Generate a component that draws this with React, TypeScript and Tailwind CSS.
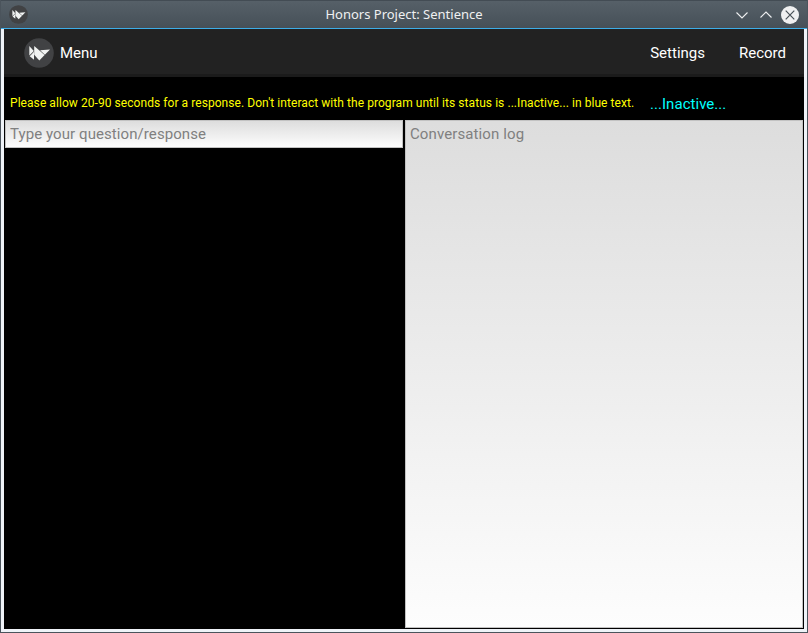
function KivyLogo({ className }: { className: string }) {
  return (
    <svg viewBox="0 0 30 30" className={className} aria-hidden="true">
      <circle cx="15" cy="15" r="14.8" fill="#414244" />
      <path d="M5.3 8 9.8 13 5.3 17.6Z" fill="#f1f3f2" />
      <path d="M10 13.8V21.8L5.7 18.2Z" fill="#f1f3f2" />
      <path d="M10.2 8 20.6 17 15.3 22.4 10.2 16.8Z" fill="#f1f3f2" />
      <path d="M16.1 12.3 26 11.6 20.9 16.7Z" fill="#f1f3f2" />
    </svg>
  );
}

function TitleBar() {
  return (
    <header className="relative flex h-7 shrink-0 items-center justify-between border-t border-[#434c54] bg-linear-to-b from-[#566068] to-[#465058] pr-[8px] pl-[8px]">
      <KivyLogo className="h-[19px] w-[19px]" />
      <h1 className="absolute inset-x-0 top-[4px] text-center font-['Noto_Sans',sans-serif] text-[13px] leading-[18px] text-[#eff0f1]">
        Honors Project: Sentience
      </h1>
      <div className="flex items-center gap-[6px]">
        <svg className="h-[18px] w-[18px]" viewBox="0 0 18 18" fill="none" stroke="#eff0f1" strokeWidth="1.1">
          <path d="M3.5 6.5 9 12l5.5-5.5" />
        </svg>
        <svg className="h-[18px] w-[18px]" viewBox="0 0 18 18" fill="none" stroke="#eff0f1" strokeWidth="1.1">
          <path d="M3.5 11.5 9 6l5.5 5.5" />
        </svg>
        <svg className="h-[18px] w-[18px]" viewBox="0 0 18 18">
          <circle cx="9" cy="9" r="9" fill="#eff0f1" />
          <path d="m4.7 4.7 8.6 8.6m0-8.6-8.6 8.6" stroke="#475057" strokeWidth="1.2" />
        </svg>
      </div>
    </header>
  );
}

export default function App() {
  return (
    <div className="flex h-[633px] w-[808px] flex-col overflow-hidden border-x border-b border-[#4b545c] bg-[#eff3f8] font-[Roboto,sans-serif]">
      <TitleBar />
      <div className="h-px shrink-0 bg-[#3daee9]" />
      <main className="mx-[3px] mb-[3px] flex min-h-0 flex-1 flex-col bg-black">
        <nav className="flex h-12 shrink-0 items-center border-b-[3px] border-[#1b1b1b] bg-[#222222] pr-[18px] pl-5 text-[15px] text-white">
          <KivyLogo className="mt-[3px] h-[30px] w-[30px]" />
          <span className="mt-[3px] ml-[6px]">Menu</span>
          <span className="mt-[3px] ml-auto">Settings</span>
          <span className="mt-[3px] ml-[34px]">Record</span>
        </nav>
        <div className="flex h-[43px] shrink-0 items-center pt-[9px] pl-[6px] whitespace-nowrap">
          <p className="w-[640px] text-[12px] tracking-[0.061px] text-[#ffff00]">
            Please allow 20-90 seconds for a response. Don't interact with the program until its status is ...Inactive... in blue text.
          </p>
          <p className="mt-[2px] text-[15px] tracking-[0.04px] text-[#00ffff]">...Inactive...</p>
        </div>
        <div className="flex min-h-0 flex-1 gap-[2px] pr-px pb-px pl-px">
          <div className="w-[398px]">
            <input
              aria-label="Question"
              placeholder="Type your question/response"
              className="block h-[28px] w-full border border-[#c2c2c2] bg-linear-to-b from-[#dddddd] to-[#fdfdfd] px-1 text-[15px] tracking-[0.08px] outline-none placeholder:text-[#808080]"
            />
          </div>
          <textarea
            aria-label="Log"
            placeholder="Conversation log"
            className="block h-full w-[398px] resize-none border border-[#c2c2c2] bg-linear-to-b from-[#dddddd] to-[#fdfdfd] px-1 pt-[4px] text-[15px] leading-[18px] tracking-[0.11px] outline-none placeholder:text-[#808080]"
          />
        </div>
      </main>
    </div>
  );
}
